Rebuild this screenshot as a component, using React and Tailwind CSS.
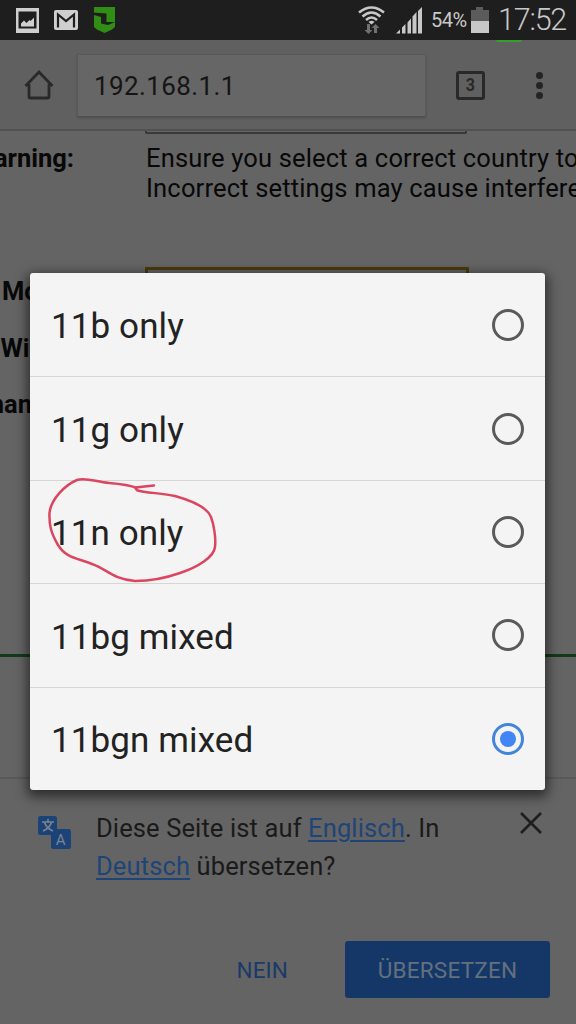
import { useState } from "react";

const OPTIONS = ["11b only", "11g only", "11n only", "11bg mixed", "11bgn mixed"];

function StatusBar() {
  return (
    <div className="flex h-10 shrink-0 items-center bg-[#1e1e1e] text-[#c8c8c8]">
      <svg className="ml-4 h-[25px] w-[23px]" viewBox="0 0 23 25" aria-hidden>
        <path fill="#cfcfcf" fillRule="evenodd" d="M0 0h23v25H0zM2.500 3.500v17h18v-17z" />
        <path fill="#cfcfcf" d="M5 18.500v-3l3-3 2.500 2.500 3-3 1 1 3.500-3.500v9z" />
      </svg>
      <svg className="ml-[15px] h-5 w-6" viewBox="0 0 24 20" aria-hidden>
        <rect width="24" height="20" rx="2" fill="#cfcfcf" />
        <path d="M4 17.500V4.500l8 6.500 8-6.500v13" fill="none" stroke="#1e1e1e" strokeWidth="2.200" />
      </svg>
      <svg className="ml-[15px] h-[26px] w-[23px]" viewBox="0 0 23 26" aria-hidden>
        <path d="M1 0h21v20l-3 2.500-7.500 3.500L4 22.500 1 20z" fill="#2f8e13" />
        <path d="M0 5.500l13.500 1v8.500H22l-7 3-7-1.500V10L1 8z" fill="#1e1e1e" />
      </svg>

      <div className="ml-auto flex items-center">
        <svg className="mr-[11px] h-[29px] w-[27px]" viewBox="0 0 27 29" aria-hidden>
          <g fill="none" stroke="#c8c8c8" strokeWidth="2.500">
            <path d="M1 6.500Q13.500-3.500 26 6.500" />
            <path d="M4.500 10.500Q13.500 2.500 22.500 10.500" />
            <path d="M8 14Q13.500 9 19 14" />
          </g>
          <path d="M10.500 16Q13.500 13.500 16.500 16l-3 2.500z" fill="#c8c8c8" />
          <path d="M9 18h3v6h2.500L10.500 28 6.500 24H9zM16 27h3v-5h2.500L17.500 18l-4 4H16z" fill="#707070" />
        </svg>
        <svg className="mr-[9px] h-[27px] w-[26px]" viewBox="0 0 26 27" fill="#c8c8c8" aria-hidden>
          <path d="M0 26.500l4-4v4zM6 26.500v-6l3.500-3.500v9.500zM11.500 26.500V15.500l3.500-4v15zM16.500 26.500V9.500l4-4.500v21.500zM22 26.500V4L26 0v26.500z" />
        </svg>
        <span className="w-[36px] whitespace-nowrap text-[20px] leading-10 tracking-[-0.5px]">
          54%
        </span>
        <svg className="ml-1 mr-[9px] h-[26px] w-[18px]" viewBox="0 0 18 26" aria-hidden>
          <path d="M0 3h5V0h7v3h6v11H0z" fill="#5b5b5b" />
          <path d="M0 14h18v12H0z" fill="#c8c8c8" />
        </svg>
        <span className="w-[78px] whitespace-nowrap text-[30.5px] font-light leading-10 tracking-[-1.2px]">
          17:52
        </span>
      </div>
    </div>
  );
}

function Toolbar() {
  return (
    <div className="relative flex h-[91px] shrink-0 items-center border-b-2 border-[#515151] bg-[#606060] pt-[1px]">
      {/* page load progress */}
      <div className="absolute left-[496px] top-0 h-[2px] w-[26px] rounded-b-full bg-[#32a22d]" />
      <svg
        className="ml-6 h-[30px] w-[30px]"
        viewBox="0 0 30 30"
        fill="none"
        stroke="#292929"
        strokeWidth="2.800"
        aria-hidden
      >
        <path d="M1.500 16L15 2l13.500 14M5 14v13q0 1 1 1h18q1 0 1-1V14" />
      </svg>
      <div className="ml-[23px] flex h-[63px] w-[349px] items-center border border-[#595959] border-b-[#505050] bg-[#666] pl-4 shadow-[0_1px_2px_rgba(0,0,0,0.2)]">
        <span className="pt-[2px] text-[26px] tracking-[0.4px] text-[#151515]">192.168.1.1</span>
      </div>
      <div className="ml-[30px] flex h-[29px] w-[29px] items-center justify-center rounded-[3px] border-[3px] border-[#292929] text-[19px] font-bold text-[#292929]">
        <span className="scale-x-[0.85]">3</span>
      </div>
      <div className="ml-[51px] flex flex-col gap-[3px]">
        <span className="h-[7px] w-[7px] rounded-full bg-[#242424]" />
        <span className="h-[7px] w-[7px] rounded-full bg-[#242424]" />
        <span className="h-[7px] w-[7px] rounded-full bg-[#242424]" />
      </div>
    </div>
  );
}

function Label({ children }) {
  return (
    <div className="flex w-[74px] shrink-0 justify-end whitespace-nowrap font-bold">
      {children}
    </div>
  );
}

function RouterPage() {
  return (
    <div className="flex h-[648px] shrink-0 flex-col overflow-hidden border-b-2 border-[#595959] text-[25.5px] leading-[30px] text-[#080808]">
      <div className="ml-[145px] h-[3px] w-[322px] shrink-0 rounded-b-[2px] border-x-2 border-b-2 border-[#3a3a3a]" />
      <div className="mt-[9px] flex shrink-0">
        <Label>Warning:</Label>
        <p className="ml-[72px] whitespace-nowrap tracking-[0.17px]">
          Ensure you select a correct country to
          <br />
          Incorrect settings may cause interference.
        </p>
      </div>
      <div className="mt-[64px] flex h-[44px] shrink-0">
        <div className="pt-[9px]">
          <Label>Mode:</Label>
        </div>
        <div className="ml-[71px] h-10 w-[324px] rounded-t-[1px] border-[3px] border-[#4c3a0a]" />
      </div>
      <div className="mt-[22px]">
        <Label>Width:</Label>
      </div>
      <div className="mt-[26px]">
        <Label>Channel:</Label>
      </div>
      <div className="mt-[235px] h-[3px] shrink-0 bg-[#123b1c]" />
    </div>
  );
}

function TranslateBar() {
  return (
    <div className="flex flex-1 flex-col bg-[#646464] text-[#1a1a1a]">
      <div className="flex">
        <svg className="ml-[38px] mt-[37px] h-[33px] w-[33px] shrink-0" viewBox="0 0 33 33" aria-hidden>
          <rect width="19" height="19" rx="2.500" fill="#1c4377" />
          <rect x="13" y="13" width="20" height="20" rx="2.500" fill="#1c4377" />
          <path
            d="M4 6h12M10 3v3M6.500 6q1.500 6 8.500 9M13.500 6q-1.500 6-8.500 9"
            fill="none"
            stroke="#7b8591"
            strokeWidth="1.600"
          />
          <text x="22.700" y="28.500" textAnchor="middle" fontSize="15" fill="#7b8591">
            A
          </text>
        </svg>
        <p className="ml-[25px] mt-[30px] whitespace-nowrap text-[25.5px] leading-[38px] tracking-[0.12px]">
          Diese Seite ist auf{" "}
          <a className="text-[#1f4478] underline decoration-2 underline-offset-[3px]">Englisch</a>. In
          <br />
          <a className="text-[#1f4478] underline decoration-2 underline-offset-[3px]">Deutsch</a>{" "}
          übersetzen?
        </p>
        <svg
          className="ml-auto mr-[34px] mt-[33px] h-[22px] w-[22px]"
          viewBox="0 0 22 22"
          stroke="#1e1e1e"
          strokeWidth="2.600"
          aria-hidden
        >
          <path d="M1 1l20 20M21 1L1 21" />
        </svg>
      </div>
      <div className="mt-[56px] flex justify-end pr-[26px] text-[22.5px]">
        <button type="button" className="mr-[57px] pt-[2px] tracking-[0.1px] text-[#1a3a69]">
          NEIN
        </button>
        <button
          type="button"
          className="h-[57px] w-[205px] rounded-[3px] bg-[#153767] pt-[2px] tracking-[0.2px] text-[#64707f]"
        >
          ÜBERSETZEN
        </button>
      </div>
    </div>
  );
}

function Radio({ checked }) {
  return (
    <span
      className={`flex h-8 w-8 items-center justify-center rounded-full border-[3px] ${checked ? "border-[#4285dc]" : "border-[#5a5a5a]"}`}
    >
      {checked && <span className="h-4 w-4 rounded-full bg-[#4285f4]" />}
    </span>
  );
}

function SelectDialog({ value, onChange }) {
  return (
    <div
      role="radiogroup"
      className="absolute left-[30px] top-[273px] flex h-[517px] w-[515px] flex-col rounded-[3px] bg-[#f4f4f4] pt-[1px] shadow-[0_4px_12px_3px_rgba(0,0,0,0.55)]"
    >
      {OPTIONS.map((option, i) => (
        <button
          key={option}
          type="button"
          role="radio"
          aria-checked={value === option}
          onClick={() => onChange(option)}
          className={`flex flex-1 items-center justify-between px-[21px] text-[35px] tracking-[0.1px] text-[#222] ${i > 0 ? "border-t border-[#d6d6d6]" : ""}`}
        >
          <span className="pt-[5px]">{option}</span>
          <Radio checked={value === option} />
        </button>
      ))}
      {/* red pen mark around the third option */}
      <svg
        className="pointer-events-none absolute left-0 top-[197px] h-[130px] w-[220px]"
        viewBox="0 0 220 130"
        fill="none"
        stroke="#dc4560"
        strokeWidth="2.500"
        strokeLinecap="round"
        strokeLinejoin="round"
        aria-hidden
      >
        <path d="M124 15.500L105 17.500L107 20.200C115 23 132 23 145 26C163 31 177 37 181 47C184 55 186 68 185 77C184 87 168 97 150 103C133 109 118 111 105 111C82 109 77 99 62 94C47 88 36 88 28 75C21 63 19 55 19.500 43C21 29 35 15 47 10C56 7 66 12 79 13C92 14 102 16 107 18" />
      </svg>
    </div>
  );
}

export default function App() {
  const [mode, setMode] = useState("11bgn mixed");

  return (
    <div className="relative flex h-[1024px] w-[576px] flex-col overflow-hidden bg-[#646464] font-[Roboto,sans-serif]">
      <StatusBar />
      <Toolbar />
      <RouterPage />
      <TranslateBar />
      <SelectDialog value={mode} onChange={setMode} />
    </div>
  );
}
